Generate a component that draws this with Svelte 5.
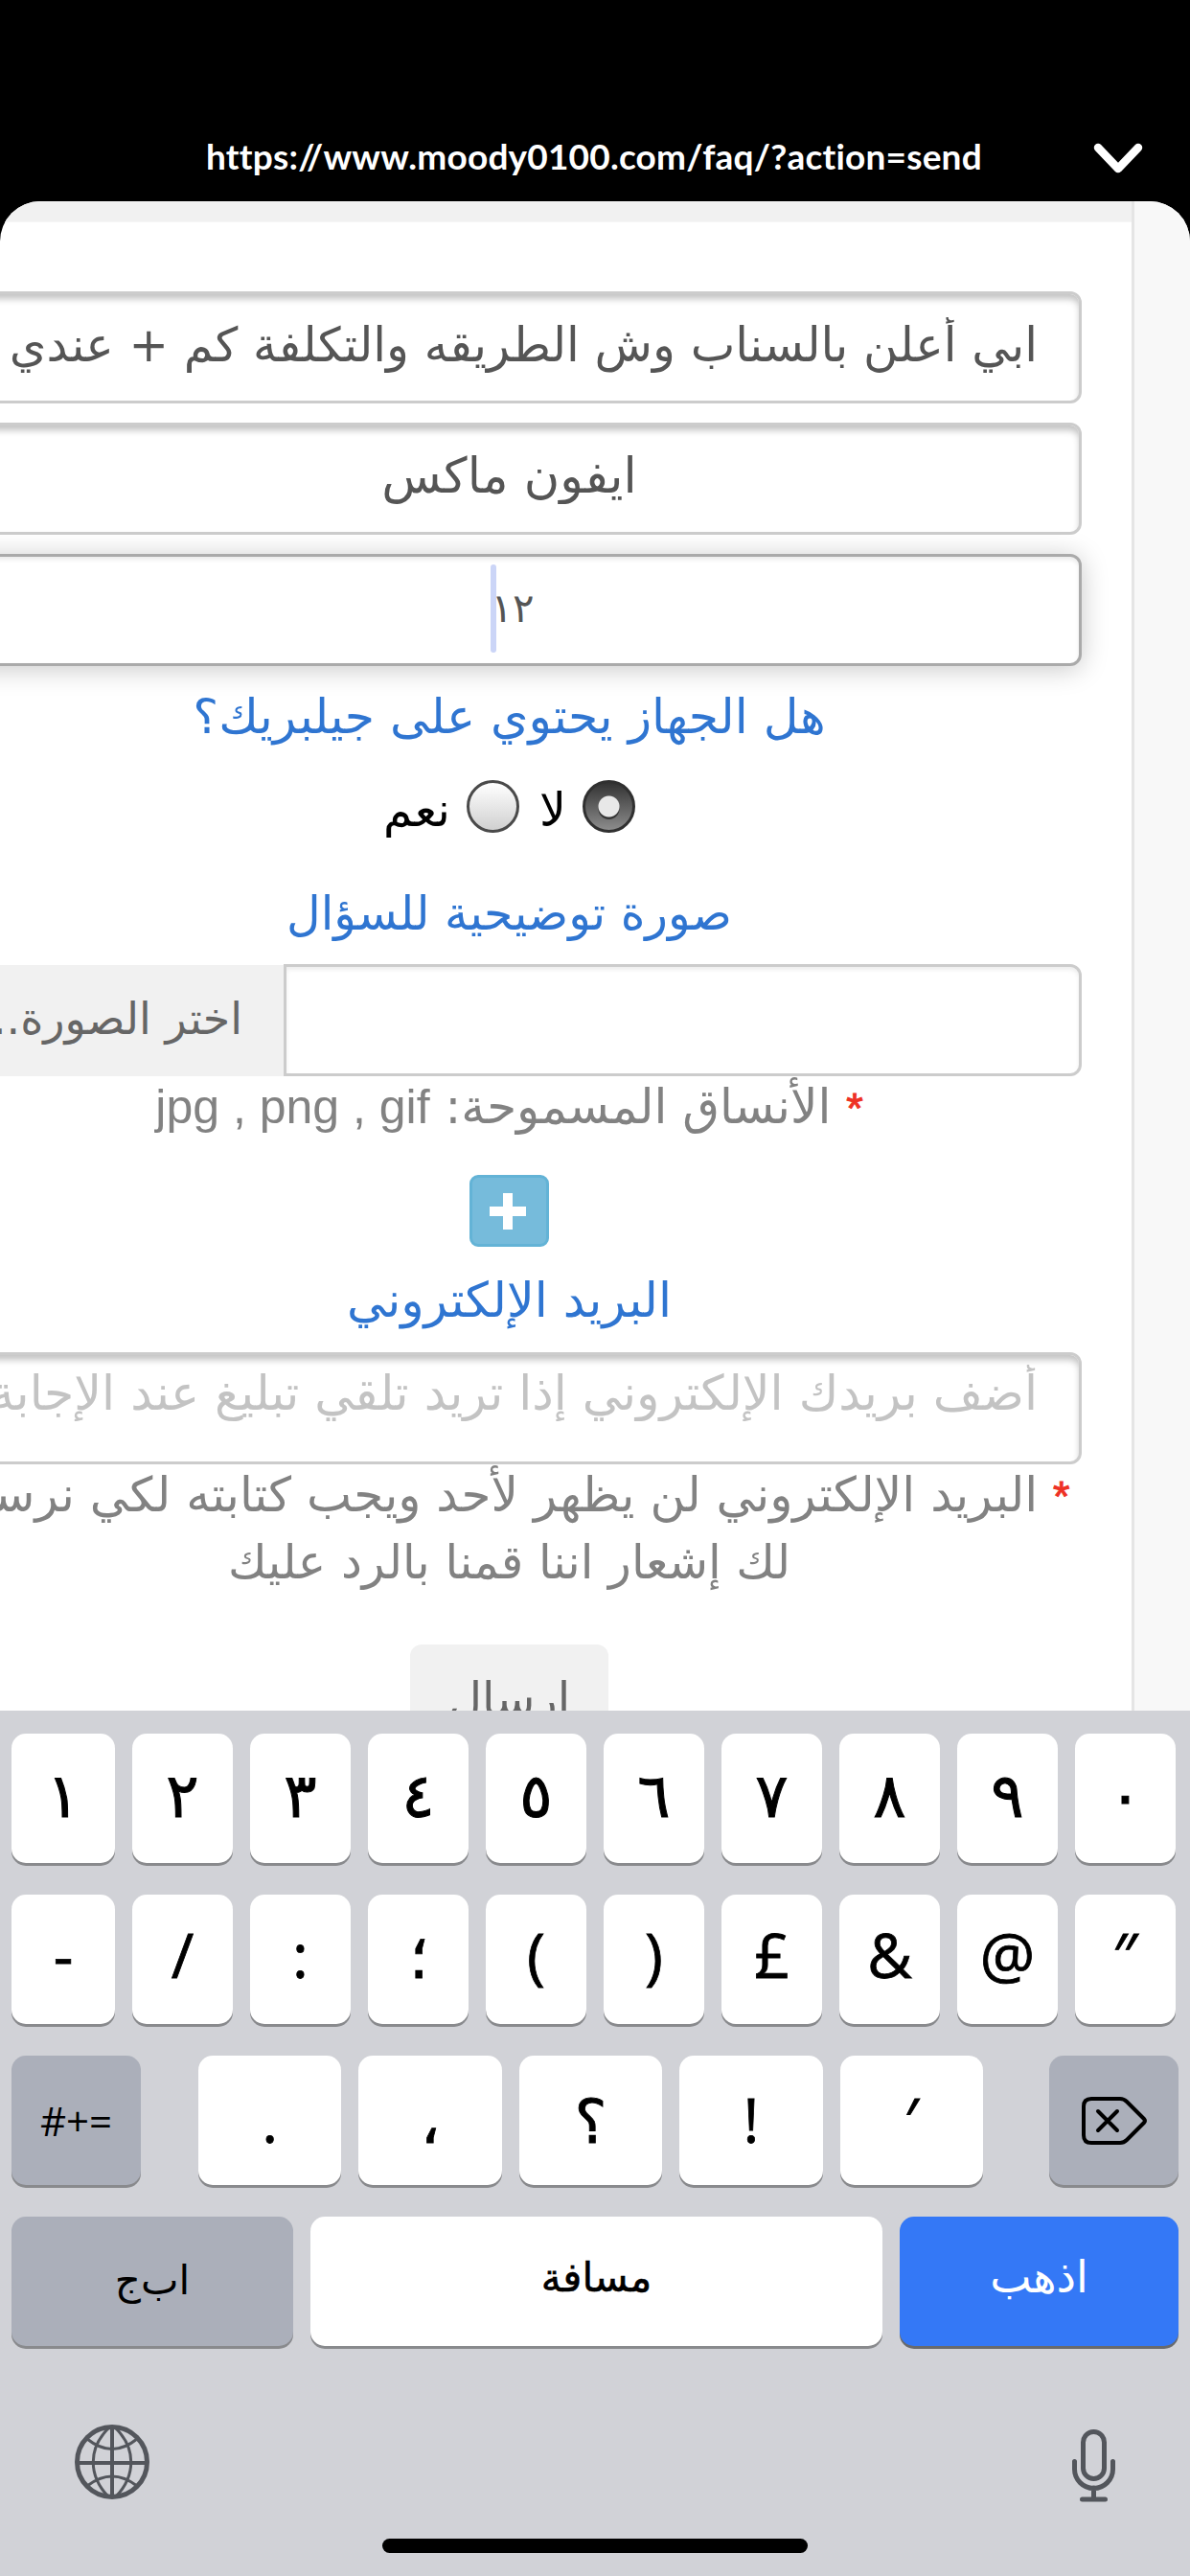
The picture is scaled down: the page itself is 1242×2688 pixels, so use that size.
<script lang="ts">
	const url = 'https://www.moody0100.com/faq/?action=send';

	let question = $state('ابي أعلن بالسناب وش الطريقه والتكلفة كم + عندي');
	let device = $state('ايفون ماكس');
	let version = $state('١٢');
	let jailbreak = $state('no');

	const digits = ['١', '٢', '٣', '٤', '٥', '٦', '٧', '٨', '٩', '٠'];
	const symbols = ['-', '/', ':', '؛', '(', ')', '£', '&', '@', '″'];
	const marks = ['.', '،', '؟', '!', '′'];
</script>

<div class="screen">
	<header>
		<span class="url">{url}</span>
		<svg class="chevron" viewBox="0 0 54 34" aria-hidden="true">
			<path d="M6 6 27 28 48 6" />
		</svg>
	</header>

	<main>
		<div class="page">
			<div class="strip"></div>
			<form dir="rtl">
				<input class="field long" bind:value={question} />
				<input class="field device" bind:value={device} />
				<div class="active">
					<input class="field focused" bind:value={version} />
					<span class="caret"></span>
				</div>

				<div class="label q1"><span>هل الجهاز يحتوي على جيلبريك؟</span></div>
				<div class="radios">
					<button type="button" class="radio" class:on={jailbreak === 'no'} aria-label="لا" onclick={() => (jailbreak = 'no')}></button>
					<span class="no">لا</span>
					<button type="button" class="radio" class:on={jailbreak === 'yes'} aria-label="نعم" onclick={() => (jailbreak = 'yes')}></button>
					<span class="yes">نعم</span>
				</div>

				<div class="label q2"><span>صورة توضيحية للسؤال</span></div>
				<div class="file">
					<div class="file-name"></div>
					<div class="file-button"><span>اختر الصورة...</span></div>
				</div>
				<div class="hint formats">
					<span><b>*</b> الأنساق المسموحة: <bdi>jpg , png , gif</bdi></span>
				</div>
				<button type="button" class="add" aria-label="+">
					<svg viewBox="0 0 40 40" aria-hidden="true">
						<path d="M15 1h10v14h14v10H25v14H15V25H1V15h14z" />
					</svg>
				</button>

				<div class="label q3"><span>البريد الإلكتروني</span></div>
				<input class="field long email" placeholder="أضف بريدك الإلكتروني إذا تريد تلقي تبليغ عند الإجابة" />
				<div class="hint privacy">
					<span><b>*</b> البريد الإلكتروني لن يظهر لأحد ويجب كتابته لكي نرسل</span>
					<span class="line2">لك إشعار اننا قمنا بالرد عليك</span>
				</div>
				<button type="button" class="submit"><span>ارسال</span></button>
			</form>
		</div>
		<div class="gutter"></div>
	</main>

	<section class="keyboard">
		<div class="row tens">
			{#each digits as digit}
				<div class="key digit">{digit}</div>
			{/each}
		</div>
		<div class="row tens">
			{#each symbols as symbol}
				<div class="key symbol">{symbol}</div>
			{/each}
		</div>
		<div class="row third">
			<div class="key gray more">#+=</div>
			<div class="marks">
				{#each marks as mark}
					<div class="key mark">{mark}</div>
				{/each}
			</div>
			<div class="key gray">
				<svg class="delete" viewBox="0 0 70 52" aria-hidden="true">
					<path d="M11 3h30q4 0 7 3l18 18q2 2 0 4L48 46q-3 3-7 3H11q-8 0-8-8V11q0-8 8-8z" />
					<path d="m18 16 20 20M38 16 18 36" />
				</svg>
			</div>
		</div>
		<div class="row last">
			<div class="key gray abc"><span>اب‌ج</span></div>
			<div class="key space"><span>مسافة</span></div>
			<div class="key go"><span>اذهب</span></div>
		</div>
		<div class="tools">
			<svg class="globe" viewBox="0 0 78 78" aria-hidden="true">
				<circle cx="39" cy="39" r="36.5" stroke-width="5" />
				<path stroke-width="4" d="M39 3v72M3 40h72" />
				<path stroke-width="3" d="M35 4C14 25 14 53 35 75M43 4c21 21 21 49 0 71M13 15q26 21 52 0M13 64q26-20 52 0" />
			</svg>
			<svg class="mic" viewBox="0 0 46 76" aria-hidden="true">
				<rect x="11.5" y="2.5" width="22" height="49" rx="11" />
				<path d="M2.5 33.5v8a20 20 0 0 0 40 0v-8M22.5 61v12M10.5 73h24" />
			</svg>
		</div>
		<div class="home"></div>
	</section>
</div>

<style>
	:global(body) {
		background: #000;
	}

	.screen {
		width: 1242px;
		height: 2688px;
		display: flex;
		flex-direction: column;
		overflow: hidden;
		background: #000;
		font-family: 'DejaVu Sans', sans-serif;
	}

	header {
		display: flex;
		flex: none;
		align-items: center;
		height: 92px;
		padding: 118px 0 0 215px;
	}

	.url {
		width: 810px;
		padding-bottom: 3px;
		color: #fff;
		font-family: Lato, sans-serif;
		font-size: 37px;
		font-weight: 700;
		font-variant-ligatures: none;
		letter-spacing: 0.2px;
		white-space: nowrap;
	}

	.chevron {
		width: 54px;
		height: 34px;
		margin-left: 115px;
		padding-top: 2px;
		fill: none;
		stroke: #fff;
		stroke-width: 8.5;
		stroke-linecap: round;
		stroke-linejoin: round;
	}

	main {
		display: flex;
		flex: none;
		height: 1575px;
		overflow: hidden;
		border-radius: 42px 42px 0 0;
		background: #fff;
	}

	.page {
		width: 1181px;
		flex: none;
		overflow: hidden;
	}

	.strip {
		height: 21px;
		background: #f1f1f1;
		border-bottom: 1px solid #f6f6f6;
	}

	.gutter {
		flex: 1;
		border-left: 3px solid #e5e5e5;
		background: #f8f8f8;
	}

	form {
		display: flex;
		flex-direction: column;
		align-items: center;
		width: 1195px;
		margin: 72px 0 0 -66px;
		font-size: 49px;
	}

	.field {
		display: block;
		width: 1195px;
		height: 117px;
		flex: none;
		margin: 0 0 20px;
		padding: 0 43px 6px;
		box-sizing: border-box;
		border: 3px solid #ccc;
		border-radius: 12px;
		outline: none;
		background: #fff;
		box-shadow: inset 0 6px 7px -1px rgba(0, 0, 0, 0.24);
		color: #555;
		font: inherit;
		text-align: center;
	}

	.long {
		font-size: 49.5px;
		text-align: right;
	}

	.device {
		padding-bottom: 7px;
		font-size: 51px;
	}

	.active {
		position: relative;
		height: 117px;
	}

	.focused {
		margin: 0;
		padding: 0 43px 4px 50px;
		border-color: #aaa;
		box-shadow:
			inset 0 3px 4px rgba(0, 0, 0, 0.08),
			0 3px 28px rgba(0, 0, 0, 0.22);
		font-size: 42px;
		letter-spacing: -5px;
	}

	.caret {
		position: absolute;
		left: 578px;
		top: 11px;
		width: 6px;
		height: 92px;
		border-radius: 3px;
		background: #cbd5f7;
	}

	.label {
		display: flex;
		align-items: center;
		color: #2f75d1;
		white-space: nowrap;
	}

	.q1 {
		height: 104px;
		font-size: 50.5px;
	}

	.q2 {
		height: 106px;
	}

	.q3 {
		height: 110px;
		font-size: 50.5px;
	}

	.radios {
		display: flex;
		align-items: center;
		height: 85px;
		padding-bottom: 16px;
	}

	.radio {
		width: 55px;
		height: 55px;
		padding: 0;
		border: 3px solid #4a4a4a;
		border-radius: 50%;
		background: linear-gradient(#fff, #d0d0d0);
	}

	.on {
		border-color: #303030;
		background:
			radial-gradient(circle at 50% 50%, #e8e8e8 0 10.5px, transparent 11.5px),
			radial-gradient(circle at 50% 55%, #333 0 10.5px, transparent 11.5px),
			linear-gradient(#333, #8c8c8c);
	}

	.no,
	.yes {
		margin-top: 8px;
	}

	.no {
		margin-inline: 17px 21px;
	}

	.yes {
		margin-right: 17px;
	}

	.file {
		display: flex;
		width: 1195px;
		height: 117px;
	}

	.file-name {
		width: 833px;
		box-sizing: border-box;
		border: 3px solid #ccc;
		border-radius: 0 12px 12px 0;
		box-shadow: inset 0 3px 4px rgba(0, 0, 0, 0.07);
	}

	.file-button {
		display: flex;
		flex: 1;
		align-items: center;
		margin-top: 1px;
		padding: 0 43px 5px 0;
		background: #f1f1f1;
		color: #666;
		font-size: 46px;
		white-space: nowrap;
	}

	.hint {
		color: #828282;
		font-size: 50px;
		white-space: nowrap;
	}

	.hint b {
		color: #ee3124;
		font-family: 'Liberation Sans', sans-serif;
		font-size: 45px;
		font-weight: 400;
		-webkit-text-stroke: 1px #ee3124;
	}

	bdi {
		font-family: 'Liberation Sans', sans-serif;
	}

	.formats {
		height: 67px;
		line-height: 65px;
	}

	.add {
		width: 83px;
		height: 75px;
		flex: none;
		margin: 36px 0 0;
		padding: 0 3px 0 0;
		border: 3px solid #63b3d6;
		border-radius: 9px;
		background: #76bbdb;
	}

	.add svg {
		display: block;
		width: 40px;
		height: 40px;
		margin: 0 auto;
		fill: #fff;
	}

	.email {
		margin-bottom: 0;
		padding-bottom: 32px;
		font-size: 50.5px;
	}

	.email::placeholder {
		color: #c3c3c3;
		opacity: 1;
	}

	.privacy {
		display: flex;
		flex-direction: column;
		width: 1170px;
		line-height: 69px;
		margin-top: -2px;
	}

	.line2 {
		align-self: center;
		font-size: 49.3px;
	}

	.submit {
		width: 207px;
		height: 117px;
		flex: none;
		margin-top: 51px;
		padding-bottom: 4px;
		border: 0;
		border-radius: 12px;
		background: #f1f1f1;
		color: #666;
		font: inherit;
		font-size: 48.5px;
	}

	.keyboard {
		display: flex;
		flex: 1;
		flex-direction: column;
		padding: 24px 12px 0;
		background: #d1d2d7;
	}

	.row {
		display: flex;
		flex: none;
		height: 135px;
		margin-bottom: 33px;
		gap: 18px;
	}

	.key {
		display: flex;
		flex: 1;
		align-items: center;
		justify-content: center;
		box-sizing: border-box;
		border-radius: 15px;
		background: #fff;
		box-shadow: 0 3px 0 #898a8d;
		color: #000;
		font-size: 64px;
		white-space: nowrap;
	}

	.tens .key {
		flex: none;
		width: 105px;
	}

	.tens .key:first-child {
		width: 108px;
	}

	.digit {
		padding-bottom: 6px;
		-webkit-text-stroke: 1px #000;
	}

	.symbol {
		padding-bottom: 10px;
		font-family: 'Open Sans', sans-serif;
		-webkit-text-stroke: 0.8px #000;
	}

	.gray {
		background: #abafba;
	}

	.third .gray {
		flex: none;
		width: 135px;
	}

	.more {
		font-family: 'Open Sans', sans-serif;
		font-size: 42px;
	}

	.third {
		gap: 0;
	}

	.marks {
		display: flex;
		width: 819px;
		gap: 18px;
		margin: 0 69px 0 60px;
	}

	.mark {
		padding-bottom: 2px;
		font-family: 'Open Sans', 'DejaVu Sans', sans-serif;
		-webkit-text-stroke: 0.8px #000;
	}

	.delete {
		width: 70px;
		height: 52px;
		fill: none;
		stroke: #000;
		stroke-width: 4;
		stroke-linecap: round;
		stroke-linejoin: round;
	}

	.last {
		margin-bottom: 0;
	}

	.last .key {
		flex: none;
		font-size: 42px;
	}

	.last .abc {
		width: 294px;
		padding-bottom: 2px;
	}

	.last .space {
		width: 597px;
		padding-bottom: 9px;
		-webkit-text-stroke: 0.6px #000;
	}

	.last .go {
		width: 291px;
		padding-bottom: 10px;
		background: #3478f6;
		box-shadow: 0 3px 0 #686a6d;
		color: #fff;
		font-size: 46px;
	}

	.tools {
		display: flex;
		justify-content: space-between;
		height: 119px;
		padding: 82px 65px 0 66px;
		fill: none;
		stroke: #53565c;
	}

	.globe {
		width: 78px;
		height: 78px;
	}

	.mic {
		width: 46px;
		height: 76px;
		margin-top: 5px;
		stroke-width: 5;
		stroke-linecap: round;
	}

	.home {
		width: 444px;
		height: 15px;
		margin: 0 auto;
		border-radius: 8px;
		background: #000;
	}
</style>
